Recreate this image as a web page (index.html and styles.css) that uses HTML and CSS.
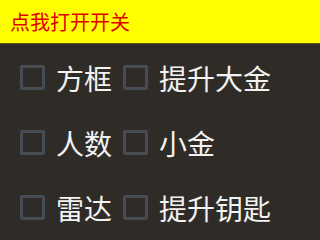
FILE: index.html
```html
<!DOCTYPE html>
<html lang="zh">
<head>
<meta charset="utf-8">
<link rel="stylesheet" href="styles.css">
</head>
<body>
<div class="header">点我打开开关</div>
<div class="grid">
  <label class="item"><span class="box"></span><span class="label">方框</span></label>
  <label class="item"><span class="box"></span><span class="label">提升大金</span></label>
  <label class="item"><span class="box"></span><span class="label">人数</span></label>
  <label class="item"><span class="box"></span><span class="label">小金</span></label>
  <label class="item"><span class="box"></span><span class="label">雷达</span></label>
  <label class="item"><span class="box"></span><span class="label">提升钥匙</span></label>
</div>
</body>
</html>
```
FILE: styles.css
```css
html, body {
  margin: 0;
  padding: 0;
  background: #2f2b27;
  height: 100%;
  overflow: hidden;
}
body {
  font-family: "Noto Sans CJK SC", "Noto Sans", sans-serif;
}
.header {
  height: 43px;
  background: #ffff00;
  color: #e00000;
  font-size: 20px;
  display: flex;
  align-items: center;
  padding-left: 10px;
  border-bottom: 1px solid #5c5a10;
}
.grid {
  display: grid;
  grid-template-columns: 103px auto;
  grid-auto-rows: 65px;
  padding-left: 20px;
  padding-top: 1px;
}
.item {
  display: flex;
  align-items: center;
  gap: 11px;
}
.box {
  width: 19px;
  height: 19px;
  border: 3px solid #464c53;
  border-radius: 2px;
  flex: none;
}
.label {
  color: #f2f2f2;
  font-size: 28px;
  line-height: 1;
}
```
